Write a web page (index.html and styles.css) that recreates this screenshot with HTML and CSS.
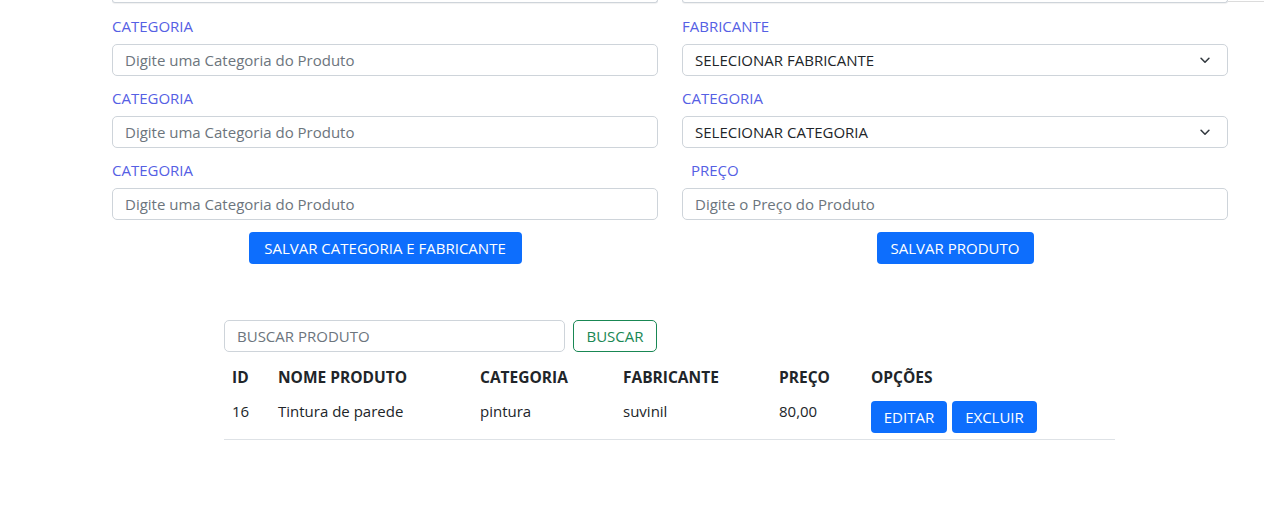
FILE: index.html
```html
<!DOCTYPE html>
<html lang="pt-BR">
<head>
<meta charset="utf-8">
<title>Produtos</title>
<link rel="stylesheet" href="styles.css">
</head>
<body>
<div class="page">
  <div class="top-strip">
    <div class="stub"></div>
    <div class="stub"></div>
    <div class="strip-line"></div>
  </div>
  <div class="forms">
    <div class="col">
      <label class="lbl">CATEGORIA</label>
      <input class="ctl" placeholder="Digite uma Categoria do Produto">
      <label class="lbl">CATEGORIA</label>
      <input class="ctl" placeholder="Digite uma Categoria do Produto">
      <label class="lbl">CATEGORIA</label>
      <input class="ctl" placeholder="Digite uma Categoria do Produto">
      <div class="btn-row"><button class="btn btn-wide">SALVAR CATEGORIA E FABRICANTE</button></div>
    </div>
    <div class="col">
      <label class="lbl">FABRICANTE</label>
      <div class="ctl sel"><span>SELECIONAR FABRICANTE</span><svg class="chev" viewBox="0 0 16 16"><path d="M3.5 6l4.5 4.5L12.5 6"/></svg></div>
      <label class="lbl">CATEGORIA</label>
      <div class="ctl sel"><span>SELECIONAR CATEGORIA</span><svg class="chev" viewBox="0 0 16 16"><path d="M3.5 6l4.5 4.5L12.5 6"/></svg></div>
      <label class="lbl lbl-preco">PREÇO</label>
      <input class="ctl" placeholder="Digite o Preço do Produto">
      <div class="btn-row"><button class="btn btn-prod">SALVAR PRODUTO</button></div>
    </div>
  </div>
  <div class="list">
    <div class="search">
      <input class="ctl search-input" placeholder="BUSCAR PRODUTO">
      <button class="btn-outline">BUSCAR</button>
    </div>
    <div class="table">
      <div class="th">ID</div>
      <div class="th">NOME PRODUTO</div>
      <div class="th">CATEGORIA</div>
      <div class="th">FABRICANTE</div>
      <div class="th">PREÇO</div>
      <div class="th">OPÇÕES</div>
      <div class="td">16</div>
      <div class="td">Tintura de parede</div>
      <div class="td">pintura</div>
      <div class="td">suvinil</div>
      <div class="td">80,00</div>
      <div class="td opts"><button class="btn btn-edit">EDITAR</button><button class="btn btn-del">EXCLUIR</button></div>
    </div>
  </div>
</div>
</body>
</html>
```

FILE: styles.css
```css
* { box-sizing: border-box; }
html, body { margin: 0; padding: 0; background: #fff; }
body {
  font-family: "Open Sans", "Noto Sans", "Liberation Sans", sans-serif;
  font-size: 15px;
  color: #212529;
  width: 1264px;
  height: 508px;
  overflow: hidden;
}
.top-strip {
  display: flex;
  align-items: flex-end;
  padding-left: 112px;
  height: 3px;
}
.stub {
  width: 546px;
  height: 3px;
  border: 1px solid #ced4da;
  border-top: none;
  border-radius: 0 0 5px 5px;
  box-shadow: 0 1px 1px rgba(0,0,0,0.06);
}
.stub + .stub { margin-left: 24px; }
.strip-line {
  flex: 1;
  height: 1px;
  margin-bottom: 1px;
  background: #dcdcdc;
}
.forms {
  display: flex;
  gap: 24px;
  padding: 13px 0 0 112px;
}
.col {
  width: 546px;
  display: flex;
  flex-direction: column;
}
.lbl {
  display: block;
  line-height: 20px;
  height: 20px;
  margin-bottom: 8px;
  color: #5560e4;
  font-size: 15px;
}
.lbl + .ctl { margin-bottom: 12px; }
.lbl-preco { padding-left: 9px; }
.ctl {
  display: block;
  width: 100%;
  height: 32px;
  border: 1px solid #ced4da;
  border-radius: 5px;
  padding: 0 12px;
  font-family: inherit;
  font-size: 15px;
  color: #212529;
  background: #fff;
  outline: none;
}
.ctl::placeholder { color: #6c757d; opacity: 1; }
.sel {
  display: flex;
  align-items: center;
  justify-content: space-between;
}
.chev {
  width: 14px;
  height: 14px;
  margin-right: 3px;
  fill: none;
  stroke: #343a40;
  stroke-width: 1.8;
  stroke-linecap: round;
  stroke-linejoin: round;
}
.btn-row {
  display: flex;
  justify-content: center;
}
.btn {
  height: 32px;
  border: none;
  border-radius: 4px;
  background: #0d6efd;
  color: #fff;
  font-family: inherit;
  font-size: 15px;
  padding: 0;
  cursor: pointer;
  white-space: nowrap;
}
.btn-wide { width: 273px; }
.btn-prod { width: 157px; }
.list {
  padding: 56px 0 0 224px;
}
.search {
  display: flex;
  gap: 8px;
}
.search-input { width: 341px; }
.btn-outline {
  width: 84px;
  height: 32px;
  border: 1px solid #198754;
  border-radius: 5px;
  background: #fff;
  color: #198754;
  font-family: inherit;
  font-size: 15px;
  padding: 0;
}
.table {
  display: grid;
  grid-template-columns: 46px 202px 143px 156px 92px 1fr;
  width: 891px;
  margin-top: 8px;
}
.th {
  padding: 7px 8px;
  line-height: 20px;
  font-weight: 700;
  font-size: 15.5px;
  color: #212529;
  white-space: nowrap;
}
.td {
  padding: 7px 8px 6px;
  line-height: 20px;
  border-bottom: 1px solid #dee2e6;
  font-size: 15px;
  white-space: nowrap;
}
.opts {
  display: flex;
  gap: 5px;
}
.btn-edit { width: 76px; }
.btn-del { width: 85px; }
```
